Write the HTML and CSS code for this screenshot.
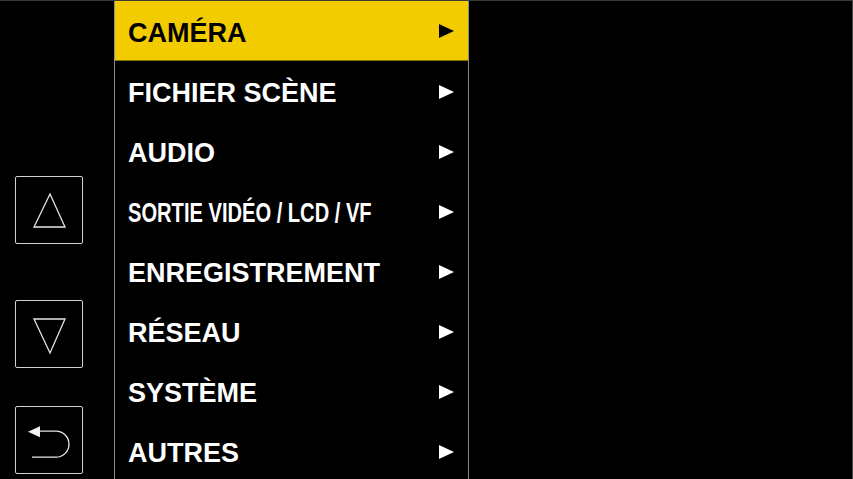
FILE: index.html
```html
<!DOCTYPE html>
<html lang="fr">
<head>
    <meta charset="UTF-8">
    <title>Menu</title>
    <link rel="stylesheet" href="styles.css">
</head>
<body>
    <div class="screen">
        <div class="side">
            <div class="key key-up">
                <svg width="66" height="66" viewBox="0 0 66 66">
                    <polygon points="34,17 18,50 49,50" fill="none" stroke="#e6e6e6" stroke-width="1.3"/>
                </svg>
            </div>
            <div class="key key-down">
                <svg width="66" height="66" viewBox="0 0 66 66">
                    <polygon points="18,18 49,18 34,52" fill="none" stroke="#e6e6e6" stroke-width="1.3"/>
                </svg>
            </div>
            <div class="key key-back">
                <svg width="66" height="66" viewBox="0 0 66 66">
                    <polygon points="12,24.7 24,19.2 24,30.2" fill="#f2f2f2"/>
                    <path d="M24 24.2 H40 A13 13 0 0 1 40 50.2 H16" fill="none" stroke="#e6e6e6" stroke-width="1.3"/>
                </svg>
            </div>
        </div>
        <div class="menu">
            <div class="row active"><span class="label">CAMÉRA</span><span class="arrow"></span></div>
            <div class="row"><span class="label">FICHIER SCÈNE</span><span class="arrow"></span></div>
            <div class="row"><span class="label">AUDIO</span><span class="arrow"></span></div>
            <div class="row"><span class="label narrow">SORTIE VIDÉO / LCD / VF</span><span class="arrow"></span></div>
            <div class="row"><span class="label">ENREGISTREMENT</span><span class="arrow"></span></div>
            <div class="row"><span class="label">RÉSEAU</span><span class="arrow"></span></div>
            <div class="row"><span class="label">SYSTÈME</span><span class="arrow"></span></div>
            <div class="row"><span class="label">AUTRES</span><span class="arrow"></span></div>
        </div>
    </div>
</body>
</html>
```

FILE: styles.css
```css
* {
    box-sizing: border-box;
    font-family: "Liberation Sans", Arial, Helvetica, sans-serif;
}
body {
    margin: 0;
    background: #000;
}
.screen {
    width: 853px;
    height: 479px;
    display: flex;
    overflow: hidden;
    background: #000;
    border-top: 1px solid #3a3a3a;
    border-right: 1px solid #444;
}
.side {
    width: 114px;
    flex: none;
    display: flex;
    flex-direction: column;
    padding-left: 15px;
}
.key {
    width: 68px;
    height: 68px;
    border: 1px solid #d0d0d0;
    border-radius: 2px;
}
.key svg {
    display: block;
}
.key-up {
    margin-top: 175px;
}
.key-down {
    margin-top: 56px;
}
.key-back {
    margin-top: 38px;
}
.menu {
    width: 355px;
    flex: none;
    border-left: 1px solid #8c8c8c;
    border-right: 1px solid #8c8c8c;
}
.row {
    height: 60px;
    display: flex;
    align-items: center;
    justify-content: space-between;
    padding: 5px 14px 0 13px;
    color: #fff;
    font-size: 27px;
    font-weight: bold;
}
.row.active {
    background: #f3cc00;
    color: #000;
    border-bottom: 1px solid #8a7400;
}
.label {
    white-space: nowrap;
}
.narrow {
    display: inline-block;
    transform: scaleX(0.745);
    transform-origin: left center;
    width: 245px;
}
.arrow {
    width: 0;
    height: 0;
    margin-top: -4px;
    border-top: 7px solid transparent;
    border-bottom: 7px solid transparent;
    border-left: 15px solid #fff;
}
.active .arrow {
    border-left-color: #000;
}
```
